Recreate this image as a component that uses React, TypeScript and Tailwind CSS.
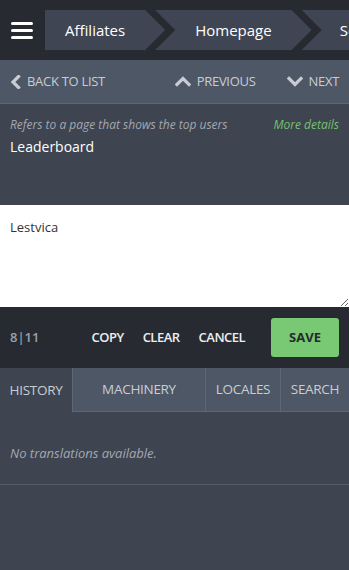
import React from "react";

const Chevron = ({ dir }: { dir: "left" | "up" | "down" }) => {
  if (dir === "left")
    return (
      <svg width="11" height="14" viewBox="0 0 11 14" className="shrink-0">
        <polyline points="8.5,1.5 3,7 8.5,12.5" fill="none" stroke="#c9cdd3" strokeWidth="3.2" strokeLinecap="square" />
      </svg>
    );
  if (dir === "up")
    return (
      <svg width="16" height="11" viewBox="0 0 16 11" className="shrink-0">
        <polyline points="2,8.5 8,2.5 14,8.5" fill="none" stroke="#c9cdd3" strokeWidth="3.2" strokeLinecap="square" />
      </svg>
    );
  return (
    <svg width="16" height="11" viewBox="0 0 16 11" className="shrink-0">
      <polyline points="2,2.5 8,8.5 14,2.5" fill="none" stroke="#c9cdd3" strokeWidth="3.2" strokeLinecap="square" />
    </svg>
  );
};

export default function App() {
  return (
    <div className="w-full min-h-[570px] bg-[#3e4450] overflow-hidden" style={{ fontFamily: '"Open Sans", "Liberation Sans", sans-serif' }}>
      {/* Header */}
      <div className="h-[60px] bg-[#272b31] flex items-center">
        <div className="w-[45px] shrink-0 pl-[11px] flex flex-col gap-[4px]">
          <span className="block w-[22px] h-[3px] rounded-[2px] bg-white" />
          <span className="block w-[22px] h-[3px] rounded-[2px] bg-white" />
          <span className="block w-[22px] h-[3px] rounded-[2px] bg-white" />
        </div>
        <div className="flex h-[40px] overflow-hidden flex-1 min-w-0">
          <div className="shrink-0 h-full flex items-center pl-[20px] pr-[40px] bg-[#3f4552] text-white text-[15px] [clip-path:polygon(0_0,calc(100%-20px)_0,100%_50%,calc(100%-20px)_100%,0_100%)]">
            Affiliates
          </div>
          <div className="shrink-0 h-full flex items-center ml-[-10px] pl-[40px] pr-[40px] bg-[#3f4552] text-white text-[15px] [clip-path:polygon(0_0,calc(100%-20px)_0,100%_50%,calc(100%-20px)_100%,0_100%,20px_50%)]">
            Homepage
          </div>
          <div className="shrink-0 h-full flex items-center ml-[-10px] pl-[38px] pr-[40px] bg-[#3f4552] text-white text-[15px] [clip-path:polygon(0_0,calc(100%-20px)_0,100%_50%,calc(100%-20px)_100%,0_100%,20px_50%)]">
            Settings
          </div>
        </div>
      </div>

      {/* Nav */}
      <div className="h-[44px] bg-[#4e5766] border-b border-[#5d6675] flex items-center pl-[10px] text-[13px] text-[#c9cdd3] tracking-[-0.3px]">
        <div className="flex items-center gap-[6px]">
          <Chevron dir="left" />
          <span>BACK TO LIST</span>
        </div>
        <div className="flex items-center gap-[6px] ml-auto">
          <Chevron dir="up" />
          <span>PREVIOUS</span>
        </div>
        <div className="flex items-center gap-[6px] ml-[31px] mr-[10px]">
          <Chevron dir="down" />
          <span>NEXT</span>
        </div>
      </div>

      {/* Info */}
      <div className="h-[101px] px-[10px] pt-[13px]">
        <div className="flex justify-between items-center text-[12px] italic leading-[16px]">
          <span className="text-[#a3a8b0]">Refers to a page that shows the top users</span>
          <span className="text-[#74c36f]">More details</span>
        </div>
        <div className="mt-[5px] text-[14px] text-white leading-[18px]">Leaderboard</div>
      </div>

      {/* Textarea */}
      <textarea
        defaultValue="Lestvica"
        className="block w-full h-[102px] bg-white text-[#333] text-[13px] leading-[18px] px-[10px] pt-[13px] outline-none"
      />

      {/* Toolbar */}
      <div className="h-[61px] bg-[#272b31] flex items-center px-[10px]">
        <span className="text-[13px] font-semibold text-[#9aa0a8] tracking-[0px]">8|11</span>
        <div className="flex items-center gap-[19px] ml-[52px] text-[13px] font-semibold text-[#eceef0] tracking-[-0.5px]">
          <span>COPY</span>
          <span>CLEAR</span>
          <span>CANCEL</span>
        </div>
        <button className="ml-auto w-[68px] h-[39px] rounded-[3px] bg-[#79c874] text-[#262a30] text-[13px] font-bold">SAVE</button>
      </div>

      {/* Tabs */}
      <div className="h-[44px] flex text-[13.5px] text-[#c9cdd3] tracking-[-0.3px]">
        <div className="w-[72px] flex items-center justify-center bg-[#3e4450]">HISTORY</div>
        <div className="w-[133px] flex items-center justify-center bg-[#4e5766] border-l border-b border-[#5d6675]">MACHINERY</div>
        <div className="w-[75px] flex items-center justify-center bg-[#4e5766] border-l border-b border-[#5d6675]">LOCALES</div>
        <div className="flex-1 flex items-center justify-center bg-[#4e5766] border-l border-b border-[#5d6675]">SEARCH</div>
      </div>

      {/* Content */}
      <div className="h-[73px] border-b border-[#555d6a] px-[10px] pt-[32px]">
        <div className="italic text-[13px] leading-[18px] text-[#a3a8b0]">No translations available.</div>
      </div>
    </div>
  );
}
